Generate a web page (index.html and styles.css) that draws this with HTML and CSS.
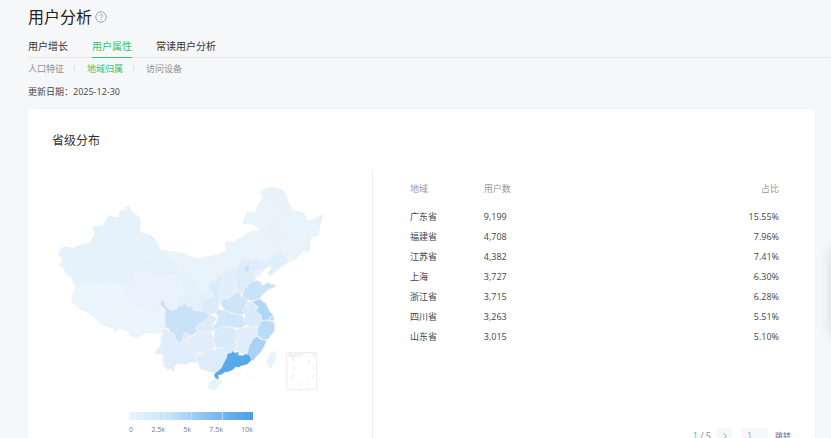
FILE: index.html
```html
<!DOCTYPE html>
<html lang="zh-CN">
<head>
<meta charset="utf-8">
<meta name="viewport" content="width=device-width, initial-scale=1">
<title>用户分析</title>
<link rel="stylesheet" href="styles.css">
</head>
<body>
<main class="page">
  <header class="heading">
    <h1>用户分析</h1>
    <svg class="help" viewBox="0 0 12 12" aria-hidden="true">
      <circle cx="6" cy="6" r="5.2"/>
      <path d="M4.4 4.9C4.4 3 7.6 3 7.6 4.8C7.6 5.9 6 5.9 6 7.2M6 8.2V9"/>
    </svg>
  </header>
  <nav class="tabs">
    <a href="#growth">用户增长</a>
    <a href="#attributes" class="active">用户属性</a>
    <a href="#frequent">常读用户分析</a>
  </nav>
  <nav class="subtabs">
    <a href="#people">人口特征</a>
    <a href="#region" class="active">地域归属</a>
    <a href="#device">访问设备</a>
  </nav>
  <p class="updated"><span>更新日期：</span><time>2025-12-30</time></p>

  <section class="card">
    <h2>省级分布</h2>
    <div class="content">
      <div class="chart">
        <svg class="map" viewBox="0 0 840 645" aria-hidden="true">
          <!-- Northern provinces -->
          <g transform="translate(390 0)">
            <path fill="#e8f3fc" d="M-50 212L-20 216L10 220L35 232L60 238L75 232L110 226L128 218L140 206L136 192L142 184L160 187L175 178L190 170L205 158L220 154L242 152L232 140L215 130L192 132L189 125L197 110L202 97L225 100L235 75L244 66L250 45L240 38L262 24L285 22L310 32L322 60L338 92L360 95L374 103L379 120L390 122L405 118L427 105L425 120L418 140L414 165L403 170L393 172L388 190L389 208L381 216L375 208L363 218L350 235L325 245L300 262L270 287L265 278L275 265L270 255L250 268L240 285L225 290L180 340L100 380L20 380L-30 280Z"/>
            <path fill="#dfeffb" d="M235 248L252 245L269 235L285 225L302 214L307 224L318 228L325 245L300 262L270 287L265 278L275 265L270 255L250 268L243 260Z"/>
            <path fill="none" d="M250 45L270 49L282 62L290 60L288 77L304 82L312 70L307 102L294 120L286 140L277 135L274 157L288 158L300 168L328 178L345 190L365 198L388 196M277 145L268 165L280 178L274 196L292 202L302 214M269 60L285 70M292 55L298 73"/>
          </g>
          <path fill="#e5f2fb" d="M226 82L238 80L242 92L262 108L270 118L272 137L267 153L278 160L295 165L310 172L320 184L325 198L331 210L340 214L325 225L300 238L275 262L245 272L248 290L238 308L200 310L160 308L110 306L78 312L70 308L68 295L48 282L42 262L28 255L37 248L37 230L27 228L28 212L38 203L53 200L68 206L85 198L105 192L122 188L125 177L134 170L131 140L160 138L168 120L176 106L190 112L207 114L210 92L226 92Z"/>
          <!-- Western provinces -->
          <g transform="translate(0 270)">
            <path fill="#e3f1fb" d="M245 2L275 -10L300 -32L330 -48L345 -57L350 -30L375 -20L385 10L425 8L425 28L440 32L445 60L460 70L475 64L479 78L460 90L463 112L450 130L435 120L410 98L380 118Z"/>
            <path fill="#e9f3fd" d="M245 2L270 -8L278 5L300 5L320 18L350 8L368 12L385 18L397 35L407 48L407 65L395 80L380 90L388 100L380 115L360 118L345 105L335 92L330 110L318 125L300 120L270 105L240 92L228 78L226 50L228 42L242 35L248 15Z"/>
            <path fill="#eaf5fd" d="M78 42L95 35L110 36L130 43L150 40L180 38L200 37L220 38L225 48L226 70L240 92L270 105L300 120L318 125L333 112L345 140L345 180L330 190L328 183L318 191L300 186L282 190L262 200L242 198L235 183L212 175L200 178L196 187L193 174L165 168L145 155L130 138L105 122L94 121L80 107L67 98L66 75L74 70Z"/>
          </g>
          <!-- Central and southern provinces -->
          <g transform="translate(300 240)">
            <path fill="#e0eefc" d="M45 205L55 215L72 220L80 250L92 250L100 225L112 215L118 225L113 245L125 265L140 275L135 290L145 305L130 308L120 306L110 313L85 310L72 318L73 335L62 326L52 328L42 318L38 302L42 290L35 282L18 282L17 273L28 262L35 250L33 235L36 228Z"/>
            <path fill="#e1eefb" d="M118 245L108 235L130 230L145 215L165 210L180 215L190 230L192 265L165 280L140 278L120 268Z"/>
            <path fill="#dcecfa" d="M132 282L150 285L165 280L180 270L195 272L202 265L222 262L225 278L232 285L225 305L210 325L195 338L170 332L152 326L147 316L145 305Z"/>
            <path fill="#dbebfa" d="M180 163L200 175L190 190L185 200L195 210L180 215L165 210L140 218L137 200L150 190L170 180Z"/>
            <path fill="#daebfa" d="M217 42L215 60L210 75L210 100L208 125L205 150L195 160L180 163L155 155L155 130L170 115L190 110L185 90L174 82L180 70L195 68L200 55Z"/>
            <path fill="#e0effb" d="M217 42L235 30L258 25L262 50L255 65L255 80L255 100L235 112L213 119L208 108L212 75Z"/>
            <path fill="#cee5f9" d="M213 120L235 115L245 108L255 98L270 97L275 110L300 115L288 130L285 145L290 160L270 165L250 160L225 150L213 135Z"/>
            <path fill="#d0e6f9" d="M200 148L225 152L250 162L275 165L285 180L290 195L270 205L240 200L215 202L195 208L188 200L200 185L205 172L198 160Z"/>
            <path fill="#d9eafa" d="M195 208L215 200L245 203L258 210L262 230L255 250L258 270L240 278L225 280L220 262L198 262L192 240Z"/>
            <path fill="#c8e2f8" d="M32 122L42 122L48 140L65 150L80 148L85 138L97 138L102 127L112 138L125 140L130 150L160 155L180 163L170 180L150 190L137 200L140 215L130 225L118 226L110 215L100 225L98 240L88 252L78 240L72 220L60 218L55 205L45 202L45 170L45 150L30 135Z"/>
            <path fill="#e6f2fc" d="M178 370L186 362L195 358L212 358L212 370L202 378L200 386L188 390L176 384Z"/>
          </g>
          <!-- Eastern provinces -->
          <g transform="translate(525 240)">
            <path fill="#dcecfb" d="M43 10L48 0L60 -6L75 4L97 -7L100 8L110 22L90 33L85 45L92 58L62 80L52 98L35 95L35 60L32 40Z"/>
            <path fill="#c5e0f8" d="M57 25L67 17L75 24L71 35L59 37Z"/>
            <path fill="#dcecfb" d="M71 37L78 31L85 45L79 55L71 49Z"/>
            <path fill="#c8e3f8" d="M58 85L80 65L98 62L107 66L112 77L128 67L138 73L151 73L149 82L130 88L112 105L103 118L80 122L58 118L52 105Z"/>
            <path fill="#d9eafa" d="M65 125L85 130L100 140L92 155L108 165L110 185L98 200L70 200L58 185L62 165L50 150L65 140Z"/>
            <path fill="#b0d6f7" d="M68 118L82 125L95 120L103 116L122 130L135 155L145 165L137 180L110 182L108 165L92 155L100 140L85 130Z"/>
            <path fill="#e0eefb" d="M35 210L60 203L85 200L98 208L98 228L85 235L75 250L65 285L45 278L32 270L35 245Z"/>
            <path fill="#b9dcf8" d="M110 182L125 180L145 185L150 195L148 215L138 226L130 238L110 238L98 225L96 208Z"/>
            <path fill="#b9dcf8" d="M133 172L145 169L148 180L137 184Z"/>
            <path fill="#a9d3f6" d="M98 228L105 238L125 240L118 260L105 280L96 287L85 303L78 300L75 285L65 285L72 258L85 235Z"/>
            <path fill="#e8f3fc" d="M126 308L130 290L135 280L150 274L152 285L150 300L143 312L138 326L132 320Z"/>
            <path fill="#57a9eb" stroke="#65aeea" d="M9 282L20 280L23 275L30 280L40 278L37 287L55 288L60 284L73 286L78 300L68 311L45 317L43 321L33 319L25 327L12 333L0 335L-10 342L-22 344L-20 356L-29 353L-31 343L-10 325L0 305L6 295Z"/>
            <rect x="185" y="278" width="90" height="110" fill="none" stroke="#ededed"/>
            <path fill="#f1f1f1" stroke="none" d="M187 280H240L225 288L205 293L192 290ZM260 280H274L270 293Z"/>
            <path class="island-lines" d="M203 293L208 305M204 318L208 327M205 342L202 354M221 368L227 376M246 375L253 369M262 354L267 346M267 329L265 318M250 309L255 300"/>
            <path class="island-lines" d="M63 345h4M76 350h4M174 263h4"/>
          </g>
        </svg>
        <div class="legend">
          <div class="scale"><i></i><i></i><i></i><i></i></div>
          <div class="ticks"><span>0</span><span>2.5k</span><span>5k</span><span>7.5k</span><span>10k</span></div>
        </div>
      </div>
      <div class="details">
        <table>
          <thead><tr><th>地域</th><th>用户数</th><th>占比</th></tr></thead>
          <tbody>
            <tr><td>广东省</td><td>9,199</td><td>15.55%</td></tr>
            <tr><td>福建省</td><td>4,708</td><td>7.96%</td></tr>
            <tr><td>江苏省</td><td>4,382</td><td>7.41%</td></tr>
            <tr><td>上海</td><td>3,727</td><td>6.30%</td></tr>
            <tr><td>浙江省</td><td>3,715</td><td>6.28%</td></tr>
            <tr><td>四川省</td><td>3,263</td><td>5.51%</td></tr>
            <tr><td>山东省</td><td>3,015</td><td>5.10%</td></tr>
          </tbody>
        </table>
        <div class="pager">
          <span class="count"><b>1</b> / 5</span>
          <button class="next" type="button" aria-label="下一页"><svg viewBox="0 0 6 8" aria-hidden="true"><path d="M1.5 1L4.5 4L1.5 7"/></svg></button>
          <input type="text" value="1" aria-label="页码">
          <button class="jump" type="button">跳转</button>
        </div>
      </div>
    </div>
  </section>
</main>
<aside class="dock"></aside>
</body>
</html>
```
FILE: styles.css
```css
* {
  box-sizing: border-box;
}

body {
  margin: 0;
  height: 100vh;
  overflow: hidden;
  position: relative;
  background: #f6f7f9;
  color: #454545;
  font: 9px/20px "Open Sans", "Noto Sans CJK SC", sans-serif;
}

h1, h2, p {
  margin: 0;
  font-weight: 400;
}

a {
  color: inherit;
  text-decoration: none;
}

.page {
  padding: 5px 16px 0 28px;
}

.heading {
  display: flex;
  align-items: center;
  gap: 3px;
}

h1 {
  color: #222;
  font-size: 16px;
  line-height: 24px;
}

.help {
  width: 12px;
  height: 12px;
  fill: none;
  stroke: #a0a1a3;
  stroke-width: 1;
}

.tabs {
  display: flex;
  gap: 24px;
  margin-top: 7px;
  margin-right: -16px;
  border-bottom: 1px solid #e4e6e8;
  color: #333;
  font-size: 10px;
}

.tabs a {
  height: 22px;
  margin-bottom: -1px;
}

.tabs .active {
  border-bottom: 1px solid #2fc46c;
}

.active {
  color: #2fc46c;
}

.subtabs {
  display: flex;
  color: #909193;
  margin-top: 1px;
}

.subtabs a {
  display: flex;
  align-items: center;
}

.subtabs a + a::before {
  content: "";
  height: 8px;
  margin: 0 12px 0 10px;
  border-left: 1px solid #e0e1e3;
}

.updated {
  display: flex;
  margin-top: 3px;
}

.card {
  margin-top: 7px;
  padding: 22px 24px 24px;
  border-radius: 5px;
  background: #fff;
  box-shadow: 0 0 3px #eeeff1;
}

h2 {
  color: #333;
  font-size: 12px;
}

.content {
  display: grid;
  grid-template-columns: 320px 1fr;
  margin-top: 19px;
}

.map {
  display: block;
  width: 280px;
  margin-top: 10px;
  margin-left: -2px;
  stroke: #edf0f2;
  stroke-width: 3;
  stroke-linejoin: round;
}

.map .island-lines {
  fill: none;
  stroke: #e6e6e6;
}

.legend {
  width: 124px;
  margin-top: 17px;
  margin-left: 77px;
}

.scale {
  display: grid;
  grid-template-columns: repeat(4, 1fr);
  height: 8px;
  background: linear-gradient(90deg, #eaf5fd, #c9e2f8 33%, #80bdf1 66%, #4a9fe8);
}

.scale i + i {
  border-left: 1px solid #c5ddf0;
}

.ticks {
  display: flex;
  justify-content: space-between;
  color: #777;
  font-size: 7px;
}

.details {
  display: flex;
  flex-direction: column;
  min-height: 290px;
  padding: 9px 12px 14px 37px;
  border-left: 1px solid #ebedef;
}

table {
  width: 100%;
  border-collapse: collapse;
  table-layout: fixed;
}

th, td {
  height: 20px;
  padding: 0;
  text-align: left;
  font-weight: 400;
}

th {
  height: 28px;
  padding-bottom: 8px;
  color: #999;
}

th:nth-child(-n+2) {
  width: 20%;
}

th:last-child, td:last-child {
  text-align: right;
}

.pager {
  display: flex;
  justify-content: flex-end;
  align-items: center;
  margin-top: 79px;
  margin-right: -12px;
  color: #888;
}

.pager b {
  color: #2fc46c;
  font-weight: 400;
}

.pager button, .pager input {
  height: 16px;
  padding: 0;
  border: 0;
  background: #f6f7f8;
  color: #aaa;
  font: inherit;
}

.pager .next {
  width: 15px;
  margin: 0 10px 0 6px;
}

.next svg {
  display: block;
  height: 8px;
  margin: auto;
  fill: none;
  stroke: #999;
}

.pager input {
  width: 26px;
  padding-left: 5px;
}

.pager .jump {
  margin-left: 7px;
  background: none;
  color: #576b95;
  font-size: 8px;
  line-height: 16px;
}

.dock {
  position: absolute;
  top: 250px;
  left: 100%;
  width: 30px;
  height: 86px;
  box-shadow: 0 0 12px #d5d6d8;
}
```
